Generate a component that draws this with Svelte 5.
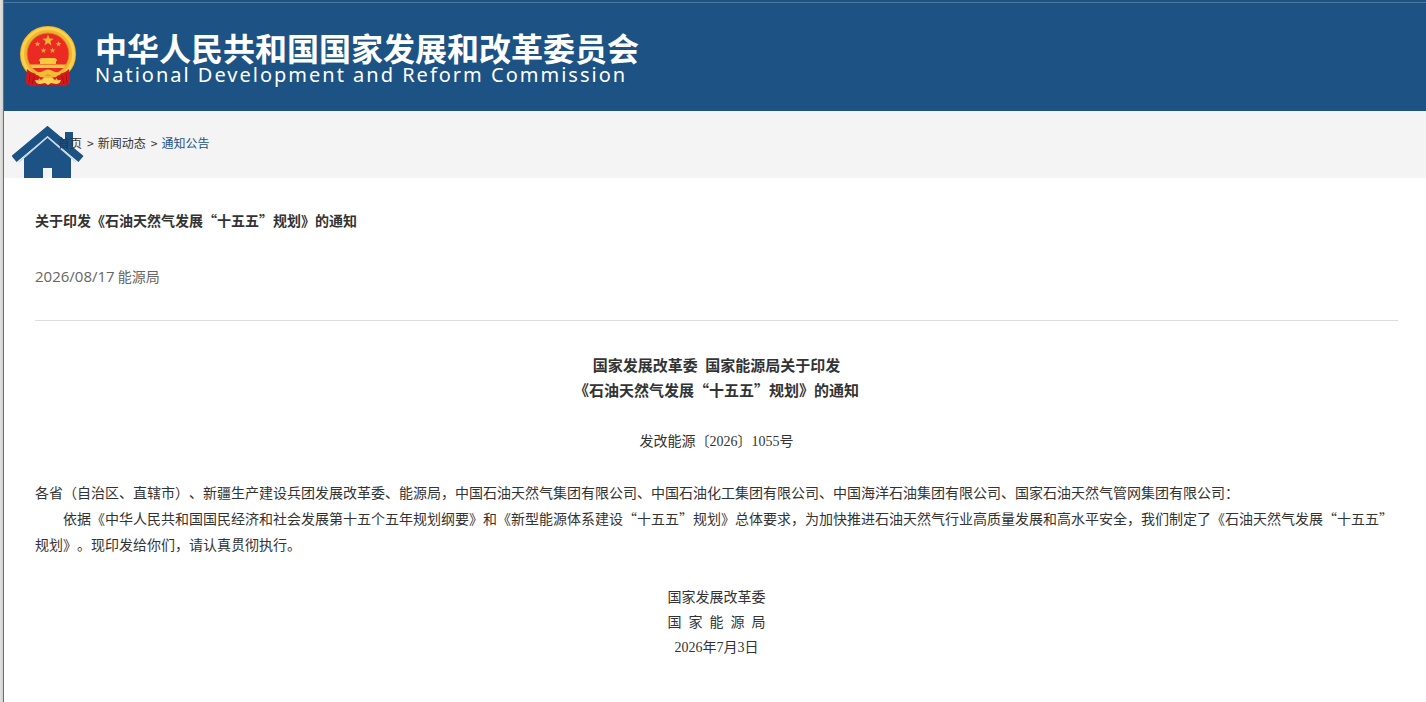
<script>
    const crumbs = [
        { label: "首页", current: false },
        { label: "新闻动态", current: false },
        { label: "通知公告", current: true },
    ];
</script>

<div class="page" lang="zh-CN">
    <header>
        <svg class="emblem" viewBox="0 0 57 61" aria-hidden="true">
            <path d="M9 42 L7 44 L6 57 L12 60 L28 59 L44 60 L50 57 L49 44 L47 42 Z" fill="#d3191d" />
            <circle cx="28" cy="28" r="24.5" fill="#ea2a23" stroke="#efb431" stroke-width="7" />
            <circle cx="28" cy="28" r="25.5" fill="none" stroke="#fbd04b" stroke-width="3" />
            <circle cx="28" cy="28" r="21" fill="none" stroke="#d98a24" stroke-width="1" />
            <path d="M28 8.5 L29.5 12.5 L33.7 12.7 L30.4 15.3 L31.5 19.4 L28 17 L24.5 19.4 L25.6 15.3 L22.3 12.7 L26.5 12.5 Z" fill="#f3b531" />
            <g fill="#eea32e">
                <path d="M17.5 15 L18.3 17 L20.4 17 L18.8 18.4 L19.3 20.4 L17.5 19.2 L15.7 20.4 L16.2 18.4 L14.6 17 L16.7 17 Z" />
                <path d="M38.5 15 L39.3 17 L41.4 17 L39.8 18.4 L40.3 20.4 L38.5 19.2 L36.7 20.4 L37.2 18.4 L35.6 17 L37.7 17 Z" />
                <path d="M23.5 21.5 L24.3 23.5 L26.4 23.5 L24.8 24.9 L25.3 26.9 L23.5 25.7 L21.7 26.9 L22.2 24.9 L20.6 23.5 L22.7 23.5 Z" />
                <path d="M32.5 21.5 L33.3 23.5 L35.4 23.5 L33.8 24.9 L34.3 26.9 L32.5 25.7 L30.7 26.9 L31.2 24.9 L29.6 23.5 L31.7 23.5 Z" />
            </g>
            <path d="M21 32 H35 L37 34 V35 H19 V34 Z M20 35 H36 V38 H20 Z M10 38.5 H46 L44 42 H12 Z" fill="#ffc840" />
            <path d="M7 43 Q11 47 17 48 L20 51 L15 59 L11 60 L6 57 Z M49 43 Q45 47 39 48 L36 51 L41 59 L45 60 L50 57 Z" fill="#d3191d" />
            <path d="M10 48 L9 57 M14 50 L12 58 M46 48 L47 57 M42 50 L44 58" stroke="#a91015" stroke-width="1" />
            <path d="M14 44 Q18 48 23 45 Q28 42 33 45 Q38 48 42 44 L40 49 L33 50 Q28 47 23 50 L16 49 Z" fill="#f5bd36" />
            <path d="M18 51 L24 51.5 L21 54 Z M38 51 L32 51.5 L35 54 Z" fill="#d3191d" />
            <path d="M15 54 L23 54.5 Q28 50 33 54.5 L41 54 Q40 58 36 58 L31 57 L28 59 L25 57 L20 58 Q16 58 15 54 Z" fill="#ffd053" />
        </svg>
        <div class="name">
            <h1>中华人民共和国国家发展和改革委员会</h1>
            <p lang="en">National Development and Reform Commission</p>
        </div>
    </header>

    <nav aria-label="当前位置">
        <svg class="home" viewBox="0 0 72 52" aria-hidden="true">
            <path d="M53 18 V6 H61 V24 Z" fill="#1c5384" />
            <path d="M12 31 L35 11 L59 31 V52 H40 V42 H31 V52 H12 Z" fill="#1c5384" />
            <path d="M2 33 L35.5 5 L69 33" fill="none" stroke="#1c5384" stroke-width="8" />
            <path d="M7 36 L35.5 11 L64 36" fill="none" stroke="#c6dced" stroke-width="1.5" />
        </svg>
        <ol>
            {#each crumbs as crumb, i}
                <li>
                    {#if i > 0}<span>&gt;</span>{/if}
                    <a href="#top" class:current={crumb.current}>{crumb.label}</a>
                </li>
            {/each}
        </ol>
    </nav>

    <main>
        <h2>关于印发《石油天然气发展“十五五”规划》的通知</h2>
        <p class="meta"><time>2026/08/17</time> 能源局</p>

        <article>
            <h3>
                国家发展改革委&ensp;国家能源局关于印发<br />
                《石油天然气发展“十五五”规划》的通知
            </h3>
            <p class="number">发改能源〔<span class="num">2026</span>〕<span class="num">1055</span>号</p>
            <div class="text">
                <p>各省（自治区、直辖市）、新疆生产建设兵团发展改革委、能源局，中国石油天然气集团有限公司、中国石油化工集团有限公司、中国海洋石油集团有限公司、国家石油天然气管网集团有限公司：</p>
                <p class="indent">依据《中华人民共和国国民经济和社会发展第十五个五年规划纲要》和《新型能源体系建设“十五五”规划》总体要求，为加快推进石油天然气行业高质量发展和高水平安全，我们制定了《石油天然气发展“十五五”规划》。现印发给你们，请认真贯彻执行。</p>
            </div>
            <p class="sign">
                国家发展改革委<br />
                国&ensp;家&ensp;能&ensp;源&ensp;局<br />
                <span class="num">2026</span>年<span class="num">7</span>月<span class="num">3</span>日
            </p>
        </article>
    </main>
</div>

<style>
    :global(body) {
        margin: 0;
        background: #fff;
    }

    .page {
        min-height: 100vh;
        box-sizing: border-box;
        padding-left: 3px;
        background: linear-gradient(to right, #e2e2e0, #d0d0ce) left / 3px 100% no-repeat;
        font-family: "Noto Sans CJK SC", sans-serif;
        font-size: 14px;
        color: #333;
        text-spacing-trim: space-all;
    }

    header,
    nav,
    main {
        border-left: 1px solid #6e6e6e;
    }

    h1,
    h2,
    h3,
    p,
    ol {
        margin: 0;
        padding: 0;
    }

    header {
        display: flex;
        align-items: flex-start;
        gap: 18px;
        height: 111px;
        box-sizing: border-box;
        padding: 26px 16px 0;
        background: linear-gradient(#4d789f, #4d789f) 0 2px / 100% 1px no-repeat #1c5384;
        color: #fff;
    }

    .emblem {
        flex: none;
        width: 57px;
        height: 61px;
    }

    h1 {
        padding-top: 5px;
        font-size: 32px;
        line-height: 32px;
        white-space: nowrap;
    }

    .name p {
        font-family: "Noto Sans", sans-serif;
        font-size: 20px;
        line-height: 24px;
        letter-spacing: 2px;
        white-space: nowrap;
    }

    nav {
        position: relative;
        height: 67px;
        overflow: hidden;
        background: #f4f4f4;
    }

    /* the house sits behind the first crumb */
    .home {
        position: absolute;
        left: 8px;
        bottom: 0;
        width: 72px;
        height: 52px;
    }

    ol {
        position: relative;
        display: flex;
        gap: 5px;
        padding: 22px 0 0 54px;
        list-style: none;
        font-size: 12px;
        line-height: 20px;
    }

    li {
        display: flex;
        gap: 4px;
    }

    a {
        color: #333;
        text-decoration: none;
    }

    a.current {
        color: #1c5384;
    }

    main {
        min-height: calc(100vh - 178px);
        box-sizing: border-box;
        padding: 31px 28px 32px 31px;
    }

    h2 {
        font-size: 14px;
        line-height: 22px;
    }

    .meta {
        padding: 34px 0 33px;
        border-bottom: 1px solid #ddd;
        line-height: 22px;
        color: #666;
    }

    time {
        font-family: "Open Sans", sans-serif;
        font-size: 15px;
    }

    article {
        padding-top: 31px;
    }

    h3 {
        font-size: 15px;
        line-height: 25px;
        text-align: center;
    }

    .number {
        padding: 26px 0 25px;
        line-height: 25px;
        text-align: center;
    }

    .text {
        line-height: 26px;
    }

    .indent {
        text-indent: 2em;
    }

    .sign {
        padding-top: 27px;
        line-height: 25px;
        text-align: center;
    }

    .num {
        font-family: "Liberation Serif", serif;
    }
</style>
